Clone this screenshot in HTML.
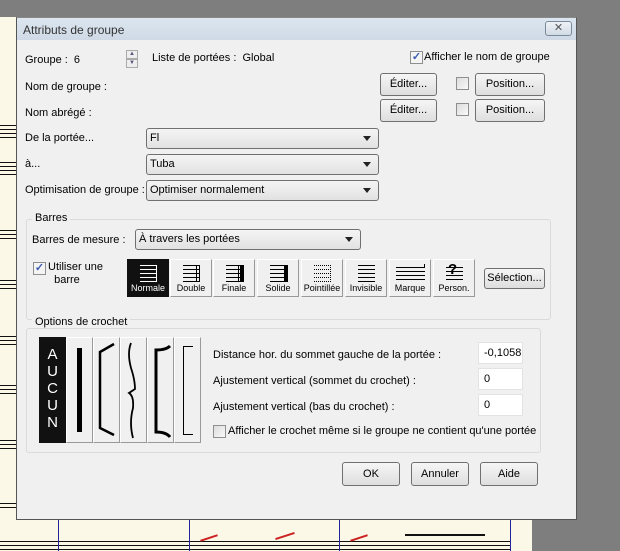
<!DOCTYPE html>
<html><head><meta charset="utf-8"><style>
*{margin:0;padding:0;box-sizing:border-box}
body{width:620px;height:551px;overflow:hidden;position:relative;background:#7e7e7e;font-family:"Liberation Sans",sans-serif;font-size:11px;color:#000}
.a{position:absolute;white-space:nowrap}
.paper{position:absolute;background:#fbf8e8}
.sl{position:absolute;height:1px;background:#111}
.btn{position:absolute;border:1px solid #707070;border-radius:3px;background:linear-gradient(#f6f6f6,#dedede);text-align:center}
.cb{position:absolute;width:13px;height:13px;border:1px solid #8f8f8f;background:linear-gradient(135deg,#dcdcdc,#fafafa)}
.sel{position:absolute;border:1px solid #707070;border-radius:3px;background:linear-gradient(#f4f4f4,#e2e2e2);padding-left:3px}
.sel:after{content:"";position:absolute;right:7px;top:7px;border-left:4px solid transparent;border-right:4px solid transparent;border-top:5px solid #222}
.grp{position:absolute;border:1px solid #dadada;border-radius:3px}
.bb{position:absolute;top:259px;width:42px;height:38px;background:#f0f0f0;border:1px solid #fff;border-right-color:#999;border-bottom-color:#999;text-align:center;font-size:9px}
.bb span{position:absolute;left:0;right:0;bottom:3px}
.bk{position:absolute;top:337px;width:27px;height:106px;background:#f0f0f0;border:1px solid #fff;border-right-color:#999;border-bottom-color:#999}
.inp{position:absolute;left:478px;width:45px;height:22px;background:#fff;border:1px solid #e3e3e3;padding:4px 0 0 5px}
</style></head><body>
<div class="paper" style="left:0;top:17px;width:17px;height:534px"></div>
<div class="paper" style="left:0;top:519px;width:532px;height:32px"></div>
<div class="sl" style="left:0;top:125px;width:16px"></div><div class="sl" style="left:0;top:129px;width:16px"></div><div class="sl" style="left:0;top:133px;width:16px"></div><div class="sl" style="left:0;top:137px;width:16px"></div>
<div class="sl" style="left:0;top:162px;width:16px"></div><div class="sl" style="left:0;top:166px;width:16px"></div><div class="sl" style="left:0;top:170px;width:16px"></div><div class="sl" style="left:0;top:174px;width:16px"></div>
<div class="sl" style="left:0;top:230px;width:16px"></div><div class="sl" style="left:0;top:234px;width:16px"></div><div class="sl" style="left:0;top:238px;width:16px"></div>
<div class="sl" style="left:0;top:280px;width:16px"></div><div class="sl" style="left:0;top:284px;width:16px"></div><div class="sl" style="left:0;top:288px;width:16px"></div>
<div class="sl" style="left:0;top:336px;width:16px"></div><div class="sl" style="left:0;top:340px;width:16px"></div><div class="sl" style="left:0;top:344px;width:16px"></div>
<div class="sl" style="left:0;top:385px;width:16px"></div><div class="sl" style="left:0;top:389px;width:16px"></div><div class="sl" style="left:0;top:393px;width:16px"></div>
<div class="sl" style="left:0;top:440px;width:16px"></div><div class="sl" style="left:0;top:444px;width:16px"></div><div class="sl" style="left:0;top:448px;width:16px"></div>
<div class="sl" style="left:0;top:503px;width:16px"></div><div class="sl" style="left:0;top:507px;width:16px"></div>
<div class="sl" style="left:0;top:541px;width:510px"></div><div class="sl" style="left:0;top:545px;width:510px"></div><div class="sl" style="left:0;top:549px;width:510px"></div>
<div class="a" style="left:58px;top:519px;width:1px;height:32px;background:#22229a"></div>
<div class="a" style="left:189px;top:519px;width:1px;height:32px;background:#22229a"></div>
<div class="a" style="left:339px;top:519px;width:1px;height:32px;background:#22229a"></div>
<div class="a" style="left:510px;top:519px;width:1px;height:32px;background:#22229a"></div>
<div class="a" style="left:200px;top:537px;width:18px;height:2px;background:#c22;transform:rotate(-18deg)"></div>
<div class="a" style="left:275px;top:535px;width:20px;height:2px;background:#c22;transform:rotate(-18deg)"></div>
<div class="a" style="left:350px;top:537px;width:18px;height:2px;background:#c22;transform:rotate(-18deg)"></div>
<div class="a" style="left:405px;top:534px;width:80px;height:2px;background:#111"></div>

<!-- dialog -->
<div class="a" style="left:16px;top:17px;width:561px;height:503px;background:#f0f0f0;border:1px solid #555;border-top-color:#888"></div>
<div class="a" style="left:17px;top:18px;width:559px;height:22px;background:linear-gradient(#dce6f0,#cfdae6)"></div>
<div class="a" style="left:23px;top:23px;font-size:12px;color:#333">Attributs de groupe</div>
<div class="a" style="left:545px;top:21px;width:27px;height:15px;border:1px solid #7a8a9a;border-radius:3px;background:linear-gradient(#eef2f6,#d2dbe4);font-size:11px;text-align:center;line-height:13px;color:#555">✕</div>

<div class="a" style="left:25px;top:54px">Groupe :&nbsp; 6</div>
<div class="a" style="left:126px;top:50px;width:12px;height:9px;border:1px solid #aaa;background:#eee;font-size:6px;text-align:center;line-height:7px;color:#557">▲</div>
<div class="a" style="left:126px;top:59px;width:12px;height:9px;border:1px solid #aaa;background:#eee;font-size:6px;text-align:center;line-height:7px;color:#557">▼</div>
<div class="a" style="left:152px;top:52px">Liste de portées :&nbsp; Global</div>
<div class="cb" style="left:410px;top:51px;background:#f4f4f4;color:#3a5ab0;font-size:11px;line-height:11px;text-align:center;font-weight:bold">✓</div>
<div class="a" style="left:424px;top:51px">Afficher le nom de groupe</div>

<div class="a" style="left:25px;top:81px">Nom de groupe :</div>
<div class="a" style="left:25px;top:107px">Nom abrégé :</div>
<div class="btn" style="left:380px;top:73px;width:57px;height:23px;line-height:21px">Éditer...</div>
<div class="btn" style="left:380px;top:99px;width:57px;height:23px;line-height:21px">Éditer...</div>
<div class="cb" style="left:456px;top:77px"></div>
<div class="cb" style="left:456px;top:103px"></div>
<div class="btn" style="left:475px;top:73px;width:70px;height:23px;line-height:21px">Position...</div>
<div class="btn" style="left:475px;top:99px;width:70px;height:23px;line-height:21px">Position...</div>

<div class="a" style="left:25px;top:132px">De la portée...</div>
<div class="a" style="left:25px;top:158px">à...</div>
<div class="a" style="left:25px;top:184px">Optimisation de groupe :</div>
<div class="sel" style="left:146px;top:128px;width:233px;height:21px;line-height:19px">Fl</div>
<div class="sel" style="left:146px;top:154px;width:233px;height:21px;line-height:19px">Tuba</div>
<div class="sel" style="left:146px;top:180px;width:233px;height:21px;line-height:19px">Optimiser normalement</div>

<div class="grp" style="left:26px;top:219px;width:525px;height:101px"></div>
<div class="a" style="left:32px;top:212px;background:#f0f0f0;padding:0 3px">Barres</div>
<div class="a" style="left:32px;top:234px">Barres de mesure :</div>
<div class="sel" style="left:135px;top:229px;width:226px;height:21px;line-height:19px">À travers les portées</div>
<div class="cb" style="left:33px;top:262px;background:#f4f4f4;color:#3a5ab0;font-size:11px;line-height:11px;text-align:center;font-weight:bold">✓</div>
<div class="a" style="left:48px;top:261px;line-height:13px">Utiliser une<br>&nbsp; barre</div>

<div class="bb" style="left:127px;background:#111;color:#fff;border-color:#111"><svg class="a" style="left:12px;top:4px" width="18" height="18" stroke="#fff" stroke-width="1"><path d="M0 1.5H16M0 5.5H16M0 9.5H16M0 13.5H16M0 17.5H16M16.5 1V18"/></svg><span>Normale</span></div>
<div class="bb" style="left:170px"><svg class="a" style="left:12px;top:4px" width="18" height="18" stroke="#000"><path d="M0 1.5H17M0 5.5H17M0 9.5H17M0 13.5H17M0 17.5H17M13.5 1V18M16.5 1V18"/></svg><span>Double</span></div>
<div class="bb" style="left:213px"><svg class="a" style="left:12px;top:4px" width="18" height="18" stroke="#000"><path d="M0 1.5H17M0 5.5H17M0 9.5H17M0 13.5H17M0 17.5H17M12.5 1V18"/><rect x="14" y="1" width="4" height="17" fill="#000" stroke="none"/></svg><span>Finale</span></div>
<div class="bb" style="left:257px"><svg class="a" style="left:12px;top:4px" width="18" height="18" stroke="#000"><path d="M0 1.5H17M0 5.5H17M0 9.5H17M0 13.5H17M0 17.5H17"/><rect x="14" y="1" width="4" height="17" fill="#000" stroke="none"/></svg><span>Solide</span></div>
<div class="bb" style="left:301px"><svg class="a" style="left:12px;top:4px" width="18" height="18" stroke="#000"><path d="M0 1.5H17M0 5.5H17M0 9.5H17M0 13.5H17M0 17.5H17M16.5 1V18" stroke-dasharray="1 1"/></svg><span>Pointillée</span></div>
<div class="bb" style="left:345px"><svg class="a" style="left:12px;top:4px" width="18" height="18" stroke="#000"><path d="M0 1.5H17M0 5.5H17M0 9.5H17M0 13.5H17M0 17.5H17"/></svg><span>Invisible</span></div>
<div class="bb" style="left:389px"><svg class="a" style="left:6px;top:4px" width="30" height="18" stroke="#000"><path d="M0 3.5H29M0 7.5H29M0 11.5H29M0 15.5H29M28.5 0V4"/></svg><span>Marque</span></div>
<div class="bb" style="left:433px"><svg class="a" style="left:12px;top:4px" width="18" height="18" stroke="#000"><path d="M0 3.5H17M0 7.5H17M0 11.5H17M0 15.5H17"/></svg><div class="a" style="left:14px;top:1px;font-size:15px;font-weight:bold">?</div><span>Person.</span></div>
<div class="btn" style="left:484px;top:268px;width:61px;height:21px;line-height:19px">Sélection...</div>

<div class="grp" style="left:26px;top:328px;width:515px;height:125px"></div>
<div class="a" style="left:32px;top:316px;background:#f0f0f0;padding:0 3px">Options de crochet</div>
<div class="bk" style="left:39px;background:#111;border-color:#111;color:#fff;font-size:15px;text-align:center;line-height:17px;padding-top:8px">A<br>U<br>C<br>U<br>N</div>
<div class="bk" style="left:66px"><div class="a" style="left:10px;top:10px;width:5px;height:84px;background:#000"></div></div>
<div class="bk" style="left:93px"><svg class="a" style="left:0;top:0" width="27" height="106" fill="none" stroke="#000" stroke-width="2.5"><path d="M20 6L6 14V90L20 97"/></svg></div>
<div class="bk" style="left:120px"><svg class="a" style="left:0;top:0" width="27" height="106" fill="none" stroke="#000" stroke-width="1.8"><path d="M10 5Q6 15 10 30Q14 42 14 51Q11 53 8 55Q13 58 12 70Q8 85 12 100"/></svg></div>
<div class="bk" style="left:147px"><svg class="a" style="left:0;top:0" width="27" height="106" fill="none" stroke="#000" stroke-width="3"><path d="M22 8Q18 12 8 12V94Q18 94 22 99"/></svg></div>
<div class="bk" style="left:174px"><svg class="a" style="left:0;top:0" width="27" height="106" fill="none" stroke="#000" stroke-width="1"><path d="M18 8.5H8.5V96.5H18"/></svg></div>

<div class="a" style="left:213px;top:349px">Distance hor. du sommet gauche de la portée :</div>
<div class="a" style="left:213px;top:375px">Ajustement vertical (sommet du crochet) :</div>
<div class="a" style="left:213px;top:401px">Ajustement vertical (bas du crochet) :</div>
<div class="inp" style="top:342px">-0,1058</div>
<div class="inp" style="top:368px">0</div>
<div class="inp" style="top:394px">0</div>
<div class="cb" style="left:213px;top:425px"></div>
<div class="a" style="left:228px;top:425px">Afficher le crochet même si le groupe ne contient qu'une portée</div>

<div class="btn" style="left:342px;top:462px;width:58px;height:24px;line-height:22px">OK</div>
<div class="btn" style="left:411px;top:462px;width:58px;height:24px;line-height:22px">Annuler</div>
<div class="btn" style="left:480px;top:462px;width:58px;height:24px;line-height:22px">Aide</div>
</body></html>
